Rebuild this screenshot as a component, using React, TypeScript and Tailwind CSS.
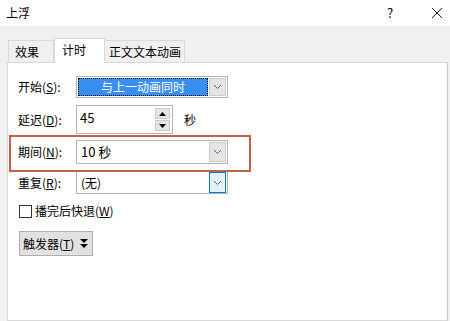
import React from 'react';

const font = { fontFamily: '"Noto Sans CJK SC", "Noto Sans", sans-serif' };

function Chevron() {
  return (
    <svg width="9" height="6" viewBox="0 0 9 6">
      <path d="M1 1 L4.5 4.5 L8 1" fill="none" stroke="#606060" strokeWidth="1" />
    </svg>
  );
}

function DropButton({ hover = false }: { hover?: boolean }) {
  return (
    <div
      className={
        'w-[17px] flex items-center justify-center border ' +
        (hover ? 'bg-[#e5f1fb] border-[#0078d7]' : 'bg-[#e5e5e5] border-[#cccccc]')
      }
    >
      <Chevron />
    </div>
  );
}

export default function App() {
  return (
    <div className="w-[450px] h-[321px] bg-[#f0f0f0] overflow-hidden flex flex-col text-[12px] text-black" style={font}>
      {/* title bar */}
      <div className="h-[26px] bg-white flex items-center pl-[6px] shrink-0">
        <span className="flex-1 text-[12px]">上浮</span>
        <span className="w-[14px] text-center text-[13px] mr-[34px]">?</span>
        <svg width="12" height="12" viewBox="0 0 12 12" className="mr-[7px]">
          <path d="M1 1 L11 11 M11 1 L1 11" stroke="#222" strokeWidth="1" />
        </svg>
      </div>

      {/* tabs */}
      <div className="flex items-end pl-[8px] mt-[11px] h-[25px] relative z-10 shrink-0">
        <div className="w-[46px] h-[22px] border border-b-0 border-[#d9d9d9] bg-[#f0f0f0] flex items-center pl-[6px]">效果</div>
        <div className="w-[51px] h-[25px] border border-b-0 border-[#d9d9d9] bg-white flex items-start pt-[2px] pl-[7px] -mb-px">计时</div>
        <div className="w-[80px] h-[22px] border border-l-0 border-b-0 border-[#d9d9d9] bg-[#f0f0f0] flex items-center pl-[4px]">正文文本动画</div>
      </div>

      {/* panel */}
      <div className="relative flex-1 ml-[7px] mr-[2px] border border-[#d9d9d9] border-r-[#c8c8c8] bg-white pl-[10px] pt-[13px] flex flex-col">
        {/* highlight box */}
        <div className="absolute left-[1px] top-[72px] w-[242px] h-[37px] border-[2px] border-[#c3604b]" />

        <div className="flex items-center h-[22px]">
          <span className="w-[58px]">
            开始(<span className="underline">S</span>):
          </span>
          <div className="w-[152px] h-[22px] border border-[#b4b4b4] bg-white flex p-[1px] gap-[1px]">
            <div className="flex-1 bg-[#3a8ef0] border border-dotted border-black text-white flex items-center justify-center">
              与上一动画同时
            </div>
            <DropButton />
          </div>
        </div>

        <div className="flex items-center h-[29px] mt-[7px]">
          <span className="w-[58px]">
            延迟(<span className="underline">D</span>):
          </span>
          <div className="w-[97px] h-[29px] border border-[#b4b4b4] bg-white flex pl-[3px] pr-[2px] py-[2px]">
            <span className="flex-1 text-[13px] leading-[20px]">45</span>
            <div className="flex flex-col justify-between w-[15px]">
              <div className="h-[11px] bg-[#e5e5e5] border border-[#cccccc] flex items-center justify-center">
                <svg width="7" height="4" viewBox="0 0 7 4"><path d="M3.5 0 L7 4 L0 4 Z" fill="#000" /></svg>
              </div>
              <div className="h-[11px] bg-[#e5e5e5] border border-[#cccccc] flex items-center justify-center">
                <svg width="7" height="4" viewBox="0 0 7 4"><path d="M0 0 L7 0 L3.5 4 Z" fill="#000" /></svg>
              </div>
            </div>
          </div>
          <span className="ml-[11px]">秒</span>
        </div>

        <div className="flex items-center h-[24px] mt-[6px]">
          <span className="w-[58px]">
            期间(<span className="underline">N</span>):
          </span>
          <div className="w-[152px] h-[24px] border border-[#b4b4b4] bg-white flex py-[1px] pr-[1px]">
            <span className="flex-1 pl-[4px] text-[13px] flex items-center">10 秒</span>
            <DropButton />
          </div>
        </div>

        <div className="flex items-center h-[23px] mt-[7px]">
          <span className="w-[58px]">
            重复(<span className="underline">R</span>):
          </span>
          <div className="w-[152px] h-[23px] border border-[#b4b4b4] bg-white flex pr-[1px]">
            <span className="flex-1 pl-[4px] flex items-center">(无)</span>
            <DropButton hover />
          </div>
        </div>

        <label className="flex items-center mt-[10px] h-[14px] gap-[3px] pl-[1px]">
          <span className="w-[13px] h-[13px] border border-[#333] bg-white" />
          <span>
            播完后快退(<span className="underline">W</span>)
          </span>
        </label>

        <div className="mt-[13px] pl-[1px]">
          <div className="w-[74px] h-[25px] bg-[#e1e1e1] border border-[#adadad] flex items-center pl-[3px] gap-[6px]">
            <span>
              触发器(<span className="underline">T</span>)
            </span>
            <svg width="8" height="9" viewBox="0 0 8 9">
              <path d="M0 0 L8 0 L4 4 Z M0 5 L8 5 L4 9 Z" fill="#000" />
            </svg>
          </div>
        </div>
      </div>
    </div>
  );
}
